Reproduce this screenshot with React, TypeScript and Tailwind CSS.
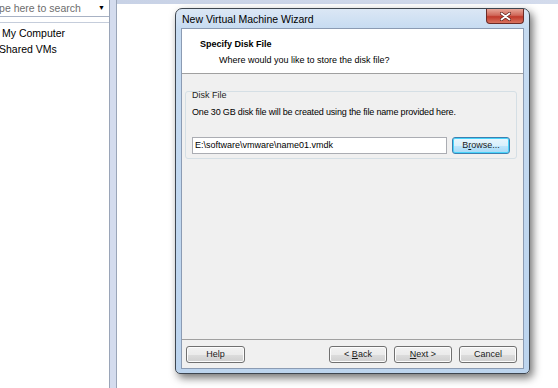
import React from "react";

function WinButton({
  children,
  className = "",
  focused = false,
}: {
  children: React.ReactNode;
  className?: string;
  focused?: boolean;
}) {
  return (
    <div
      className={
        "h-[17px] rounded-[3px] border flex items-center justify-center text-[#1a1a1a] " +
        (focused
          ? "border-[#3c7fb1] shadow-[inset_0_0_0_1px_#48d4fb] bg-[linear-gradient(#eaf6fd,#d9f0fc_50%,#bee6fd_51%,#a7d9f5)] "
          : "border-[#707070] shadow-[inset_0_0_0_1px_#fcfcfc] bg-[linear-gradient(#f2f2f2,#ebebeb_50%,#dddddd_51%,#cfcfcf)] ") +
        className
      }
    >
      {children}
    </div>
  );
}

export default function App() {
  return (
    <div className="w-[558px] h-[388px] overflow-hidden bg-white flex font-['Liberation_Sans',Arial,sans-serif] text-[9px] text-black">
      {/* Left pane: library */}
      <div className="w-[110px] h-full flex flex-col border-r border-[#9aa5b8] overflow-hidden shrink-0">
        <div className="h-[17px] flex items-center border-b border-[#a8b2c4] pr-[4px]">
          <span className="ml-[-12px] mt-[1px] text-[#6d6d6d] whitespace-nowrap text-[10.5px]">Type here to search</span>
          <span className="ml-auto text-[7px] text-black">▼</span>
        </div>
        <div className="mt-[5px] border-t border-[#c5cddb] pt-[3px] flex flex-col text-[10.5px]">
          <div className="h-[16px] flex items-center ml-[2px] whitespace-nowrap">My Computer</div>
          <div className="h-[16px] flex items-center ml-[-1px] whitespace-nowrap">Shared VMs</div>
        </div>
      </div>
      {/* Splitter */}
      <div className="w-[7px] h-full bg-[#d4dcee] border-r border-[#9aa5b8] shrink-0" />

      {/* Workspace */}
      <div className="flex-1 h-full flex flex-col">
        <div className="h-[4px] bg-[linear-gradient(90deg,#c8d2e6,#d3dbec)] shrink-0" />
        <div className="flex-1">
          {/* Wizard window */}
          <div className="ml-[58px] mt-[4px] w-[355px] h-[366px] rounded-t-[7px] rounded-b-[5px] border border-[#3e4650] bg-[linear-gradient(#dbe7f5,#c6dbf1_20px,#bcd4ee)] shadow-[3px_4px_9px_rgba(0,0,0,0.55)] flex flex-col px-[5px] pb-[4px]">
            <div className="h-[19px] flex items-center shrink-0">
              <span className="ml-[1px] mt-[2px] text-[10.5px]">New Virtual Machine Wizard</span>
              <div className="ml-auto mr-[0px] self-start w-[38px] h-[15px] rounded-b-[4px] border border-t-0 border-[#6b2b27] bg-[linear-gradient(#e8a597,#d0685a_45%,#c0392b_55%,#d9735f)] flex items-center justify-center">
                <svg width="11" height="9" viewBox="0 0 11 9">
                  <path d="M1.5 1.5 L9.5 7.5 M9.5 1.5 L1.5 7.5" stroke="#5a1d18" strokeWidth="3.2" strokeLinecap="round" />
                  <path d="M1.5 1.5 L9.5 7.5 M9.5 1.5 L1.5 7.5" stroke="#ffffff" strokeWidth="1.8" strokeLinecap="round" />
                </svg>
              </div>
            </div>

            {/* Client area */}
            <div className="flex-1 bg-[#f0f0f0] border border-[#8b9bb3] flex flex-col">
              <div className="h-[45px] bg-white border-b border-[#a0a0a0] shrink-0 flex flex-col">
                <div className="ml-[18px] mt-[9px] font-bold">Specify Disk File</div>
                <div className="ml-[37px] mt-[2px]">Where would you like to store the disk file?</div>
              </div>

              <div className="ml-[3px] mt-[17px] w-[332px] h-[68px] border border-[#d5dfe5] rounded-[3px] flex flex-col px-[6px]">
                <div className="mt-[-3px] text-[#1e1e1e]">Disk File</div>
                <div className="mt-[3px] tracking-[-0.17px]">One 30 GB disk file will be created using the file name provided here.</div>
                <div className="mt-[18px] flex items-center">
                  <div className="w-[255px] h-[17px] bg-white border border-[#abadb3] flex items-center pl-[2px]">
                    E:\software\vmware\name01.vmdk
                  </div>
                  <WinButton focused className="ml-[5px] w-[58px]">
                    <span>
                      B<span className="underline">r</span>owse...
                    </span>
                  </WinButton>
                </div>
              </div>

              <div className="flex-1" />
              <div className="h-[29px] border-t border-[#a0a0a0] flex pt-[6px] px-[6px] shrink-0">
                <WinButton className="w-[59px] ml-[-2px]">Help</WinButton>
                <WinButton className="w-[58px] ml-auto">
                  <span>
                    &lt; <span className="underline">B</span>ack
                  </span>
                </WinButton>
                <WinButton className="w-[58px] ml-[7px]">
                  <span>
                    <span className="underline">N</span>ext &gt;
                  </span>
                </WinButton>
                <WinButton className="w-[58px] ml-[7px]">Cancel</WinButton>
              </div>
            </div>
          </div>
        </div>
      </div>
    </div>
  );
}
